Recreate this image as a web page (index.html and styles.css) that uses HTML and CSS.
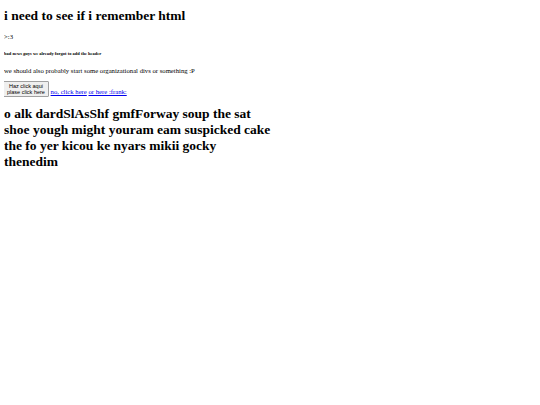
FILE: index.html
```html
<!DOCTYPE html>
<html>
<head>
<meta charset="utf-8">
<link rel="stylesheet" href="styles.css">
</head>
<body>
<h1 class="title">i need to see if i remember html</h1>
<p class="text">&gt;:3</p>
<h6 class="tiny">bad news guys we already forgot to add the header</h6>
<p class="text">we should also probably start some organizational divs or something :P</p>
<div class="row">
<button class="btn">Haz click aqui<br>plase click here</button>
<a class="link" href="#">no, click here</a>
<a class="link" href="#">or here :frank:</a>
</div>
<h1 class="big">o alk dardSlAsShf gmfForway soup the sat shoe yough might youram eam suspicked cake the fo yer kicou ke nyars mikii gocky thenedim</h1>
</body>
</html>
```
FILE: styles.css
```css
html, body { background: #fff; }
body {
  margin: 4px;
  font-family: "Liberation Serif", serif;
  font-size: 6.7px;
  color: #000;
}
.title {
  font-size: 13.5px;
  font-weight: bold;
  margin: 4px 0 9px;
}
.text {
  margin: 7px 0;
}
.tiny {
  font-size: 4.5px;
  font-weight: bold;
  margin: 11px 0;
}
.row {
  margin: 7px 0;
}
.btn {
  font-family: "Liberation Sans", sans-serif;
  font-size: 5.5px;
  line-height: 1.1;
  padding: 1px 3px;
  margin-left: -1px;
  background: #efefef;
  border: 1px solid #a0a0a0;
  border-radius: 1px;
  color: #000;
}
.link {
  color: #0000ee;
  text-decoration: underline;
}
.big {
  font-size: 13.5px;
  font-weight: bold;
  margin: 9px 0;
  width: 268px;
}
```
